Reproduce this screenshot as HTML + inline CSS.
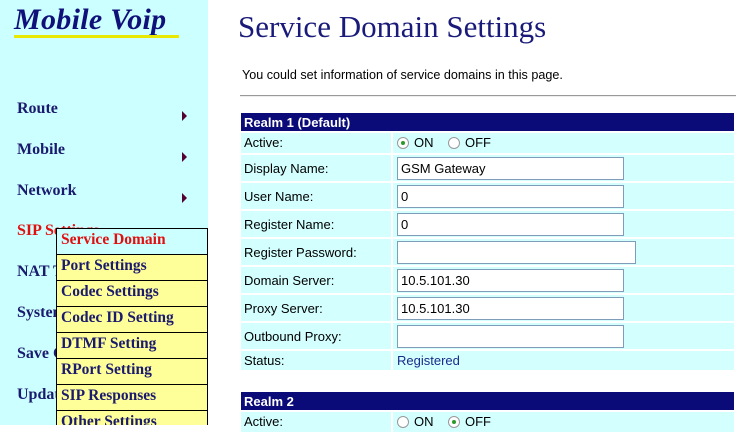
<!DOCTYPE html>
<html><head><style>
*{margin:0;padding:0;box-sizing:border-box}
body{width:736px;height:425px;overflow:hidden;background:#fff;position:relative;font-family:"Liberation Sans",Arial,sans-serif}
#side{position:absolute;left:0;top:0;width:208px;height:425px;background:#ccffff;overflow:hidden}
.logo{position:absolute;left:14px;top:3px;font:italic bold 30px "Liberation Serif",serif;color:#10107a;letter-spacing:0.3px}
.uline{position:absolute;left:14px;top:35px;width:165px;height:3px;background:#e8e800}
.mi{position:absolute;left:17px;font:bold 16px "Liberation Serif",serif;color:#1a1a6e}
.ar{position:absolute;left:182px;width:0;height:0;border-left:5px solid #550033;border-top:5px solid transparent;border-bottom:5px solid transparent}
#pop{position:absolute;left:56px;top:228px;width:152px;height:200px;border:1px solid #000;background:#000}
.pi{height:25px;margin-bottom:1px;background:#ffff99;font:bold 15.5px "Liberation Serif",serif;color:#1a1a6e;padding:2px 0 0 4px;white-space:nowrap}
h1{position:absolute;left:238px;top:9px;font:normal 31px "Liberation Serif",serif;color:#1a1a7a}
.p{position:absolute;left:242px;top:68px;font-size:12.6px;color:#000}
.hr{position:absolute;left:240px;top:95px;width:496px;height:2px;border-top:1px solid #999;border-bottom:1px solid #eee}
.hd{position:absolute;left:241px;width:493px;height:18px;background:#0a0a78;color:#fff;font-weight:bold;font-size:13px;padding:2px 0 0 3px}
.l,.v{position:absolute;background:#d4ffff;font-size:13px;color:#000}
.l{left:241px;width:150px;padding-left:3px}
.v{left:393px;width:341px}
.in{position:absolute;left:397px;width:227px;height:23px;border:1px solid #7f9db9;background:#fff;font-size:13px;padding:3px 0 0 3px}
.rd{display:inline-block;width:12px;height:12px;border:1px solid #999;border-radius:50%;vertical-align:-2px;margin-right:5px;position:relative;background:#fff}
.rd.on::after{content:"";position:absolute;left:3px;top:3px;width:4px;height:4px;border-radius:50%;background:#2a9a2a}
</style></head><body>
<div id="side">
<div class="logo">Mobile Voip</div><div class="uline"></div>
<div class="mi" style="top:100px">Route</div><div class="ar" style="top:111px"></div>
<div class="mi" style="top:141px">Mobile</div><div class="ar" style="top:152px"></div>
<div class="mi" style="top:182px">Network</div><div class="ar" style="top:193px"></div>
<div class="mi" style="top:222px;color:#e01010">SIP Settings</div>
<div class="mi" style="top:263px">NAT Traversal</div>
<div class="mi" style="top:304px">System</div>
<div class="mi" style="top:345px">Save Change</div>
<div class="mi" style="top:386px">Update</div>
<div id="pop">
<div class="pi" style="background:#ccffff;color:#e01010">Service Domain</div>
<div class="pi">Port Settings</div>
<div class="pi">Codec Settings</div>
<div class="pi">Codec ID Setting</div>
<div class="pi">DTMF Setting</div>
<div class="pi">RPort Setting</div>
<div class="pi">SIP Responses</div>
<div class="pi">Other Settings</div>
</div>
</div>
<h1>Service Domain Settings</h1>
<div class="p">You could set information of service domains in this page.</div>
<div class="hr"></div>
<div class="hd" style="top:113px">Realm 1 (Default)</div>
<div class="l" style="top:133px;height:20px;padding-top:2px">Active:</div>
<div class="v" style="top:133px;height:20px;padding:2px 0 0 4px"><span class="rd on"></span>ON&nbsp;&nbsp;&nbsp;&nbsp;<span class="rd"></span>OFF</div>

<div class="l" style="top:155px;height:26px;padding-top:6px">Display Name:</div><div class="v" style="top:155px;height:26px"></div>
<div class="l" style="top:183px;height:26px;padding-top:6px">User Name:</div><div class="v" style="top:183px;height:26px"></div>
<div class="l" style="top:211px;height:26px;padding-top:6px">Register Name:</div><div class="v" style="top:211px;height:26px"></div>
<div class="l" style="top:239px;height:26px;padding-top:6px">Register Password:</div><div class="v" style="top:239px;height:26px"></div>
<div class="l" style="top:267px;height:26px;padding-top:6px">Domain Server:</div><div class="v" style="top:267px;height:26px"></div>
<div class="l" style="top:295px;height:26px;padding-top:6px">Proxy Server:</div><div class="v" style="top:295px;height:26px"></div>
<div class="l" style="top:323px;height:26px;padding-top:6px">Outbound Proxy:</div><div class="v" style="top:323px;height:26px"></div>
<div class="l" style="top:351px;height:19px;padding-top:2px">Status:</div><div class="v" style="top:351px;height:19px;padding:2px 0 0 4px;color:#1a2a8a">Registered</div>

<div class="in" style="top:157px">GSM Gateway</div>
<div class="in" style="top:185px">0</div>
<div class="in" style="top:213px">0</div>
<div class="in" style="top:241px;width:239px"></div>
<div class="in" style="top:269px">10.5.101.30</div>
<div class="in" style="top:297px">10.5.101.30</div>
<div class="in" style="top:325px"></div>

<div class="hd" style="top:392px">Realm 2</div>
<div class="l" style="top:412px;height:20px;padding-top:2px">Active:</div>
<div class="v" style="top:412px;height:20px;padding:2px 0 0 4px"><span class="rd"></span>ON&nbsp;&nbsp;&nbsp;&nbsp;<span class="rd on"></span>OFF</div>
</body></html>
